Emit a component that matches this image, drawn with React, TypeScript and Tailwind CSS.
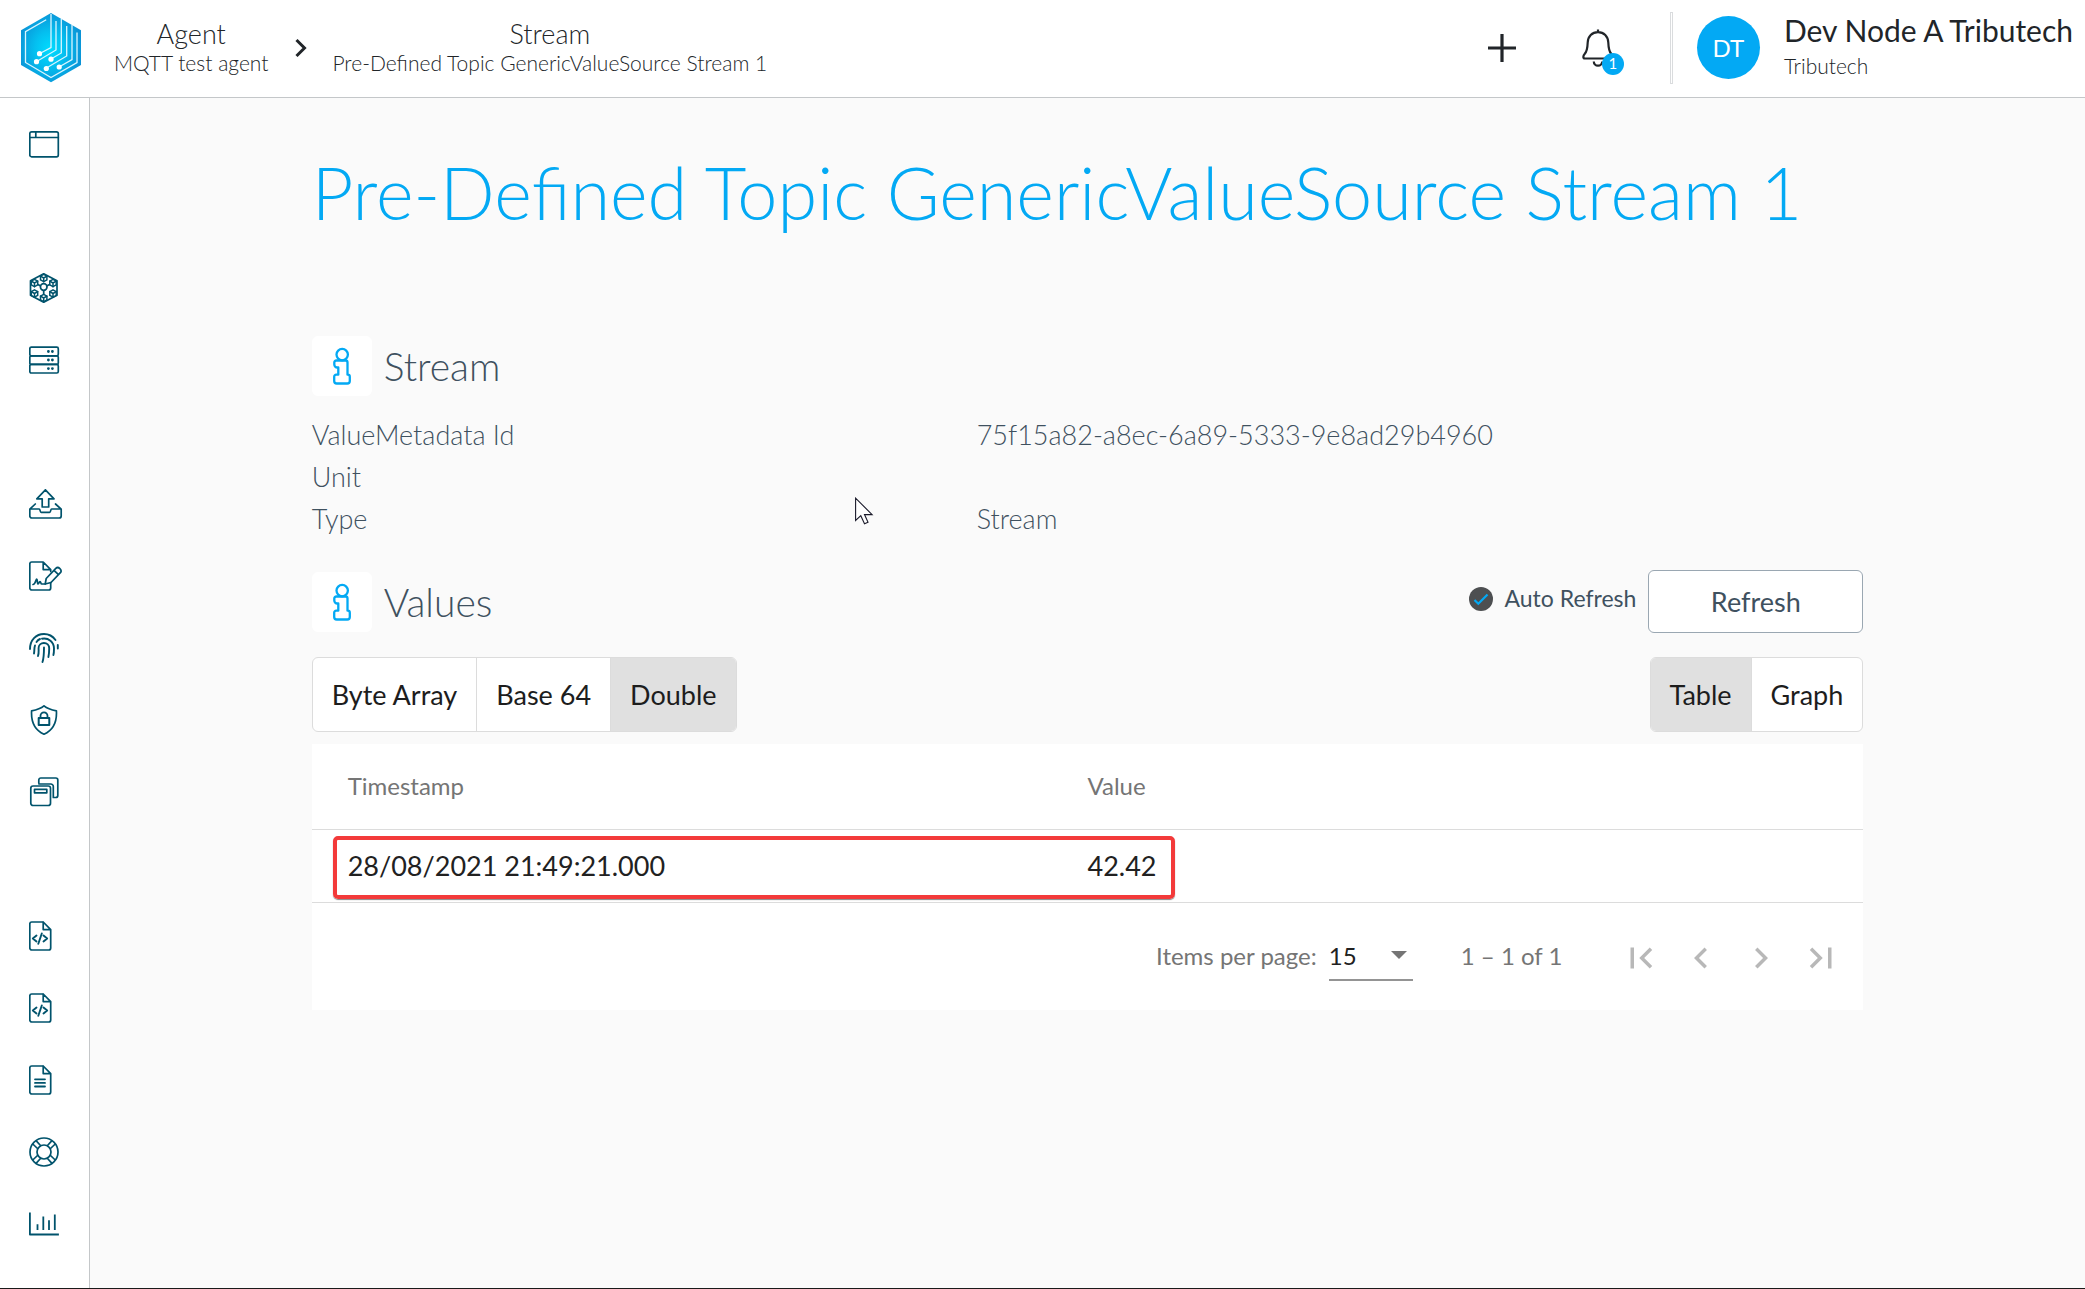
import React from "react";

type IconProps = { children: React.ReactNode };

function LineIcon({ children }: IconProps) {
  return (
    <svg
      aria-hidden="true"
      width="34"
      height="30"
      viewBox="0 0 34 30"
      fill="none"
      stroke="#00536c"
      strokeWidth="1.7"
      strokeLinecap="round"
      strokeLinejoin="round"
    >
      {children}
    </svg>
  );
}

function PageOutline() {
  return (
    <path d="M13.7 1H2.7A2 2 0 0 0 .8 3v24a2 2 0 0 0 2 2h16.900a2 2 0 0 0 2-2V8.600L14.200 1v7.600h7.500" />
  );
}

function WindowIcon() {
  return (
    <LineIcon>
      <rect x=".8" y="2.800" width="28.500" height="25" rx="1.800" />
      <path d="M.8 8.500h28.500M6.800 3v5.500" />
    </LineIcon>
  );
}

function Cube({ x, y }: { x: number; y: number }) {
  return (
    <g transform={`translate(${x} ${y})`} strokeWidth="1.5">
      <path fill="white" d="M0-3.700 3.200-1.900V1.900L0 3.700-3.200 1.900V-1.900Z" />
      <path d="M-3.200-1.900 0 0 3.200-1.900M0 0v3.700" />
    </g>
  );
}

function NetworkIcon() {
  return (
    <LineIcon>
      <path d="M14.700.8 28 7.800v14.400l-13.300 7-13.200-7V7.800Z" />
      <path d="M14.700 14.500 5.500 9.800M14.700 14.500 24 9.800M14.700 14.500V25" />
      <circle cx="14.700" cy="14" r="3.300" fill="white" />
      <Cube x={14.7} y={5} />
      <Cube x={5.5} y={10} />
      <Cube x={24} y={10} />
      <Cube x={5.5} y={20.5} />
      <Cube x={24} y={20.5} />
      <Cube x={14.7} y={25} />
    </LineIcon>
  );
}

function ServerIcon() {
  return (
    <LineIcon>
      <rect x=".8" y="2.200" width="28.500" height="8.600" rx="1.500" />
      <rect x=".8" y="10.800" width="28.500" height="8.600" rx="1.500" />
      <rect x=".8" y="19.400" width="28.500" height="8.600" rx="1.500" />
      <path strokeWidth="2.800" d="M19.400 6.500h.01M23.400 6.500h.01M19.400 15h.01M23.400 15h.01M19.400 23.600h.01M23.400 23.600h.01" />
    </LineIcon>
  );
}

function UploadIcon() {
  return (
    <LineIcon>
      <path d="M16.400.8 25 9.800h-5.300V18h-6.500V9.800H7.800Z" />
      <path d="M6.300 15 .8 20.200V27a2 2 0 0 0 2 2h27.400a2 2 0 0 0 2-2v-6.800L26.500 15M.8 20h9.400c1.200 0 .6 3.400 2 3.400h8.400c1.400 0 .8-3.400 2-3.400h9.600" />
    </LineIcon>
  );
}

function SignatureIcon() {
  return (
    <LineIcon>
      <path d="M21.700 10.500V8.600L14.200 1H2.700A2 2 0 0 0 .8 3v24a2 2 0 0 0 2 2h16.900a2 2 0 0 0 2-2v-5.500M14.200 1v7.600h7.500" />
      <path d="M4 23.500c2.500 0 2.800-5.500 3.700-5.500 1 0 .3 5 1.400 5 1 0 .9-2.500 1.900-2.500s.6 2.500 1.700 2.500h3.600" />
      <path d="m16.200 23 1-5.500 9.600-10.200c2.600-2.300 6.800 1.600 4.600 4.400L22 21.500ZM25 9.400l4.500 4.300" />
    </LineIcon>
  );
}

function FingerprintIcon() {
  return (
    <LineIcon>
      <g strokeWidth="1.900">
        <path d="M1 16C1 7 7 1 15 1c5 0 9 2.500 11.500 6" />
        <path d="M28.800 12v3.500" />
        <path d="M5 20.500c.6-3 0-5.500 1-8" />
        <path d="M7.500 9c1-1.500 2-2.400 3.500-3" />
        <path d="M13 5.700C19.500 4.500 25 9 25 15.500c0 2.500 0 4.500-.6 6.500" />
        <path d="M9 23c1-3 .6-5 .6-8 0-3 2.400-5 5.300-5 3 0 5.300 2.300 5.300 5.300 0 3 0 5.500-.8 8.700" />
        <path d="M15 14.500c0 5 0 10-1.500 14.500" />
      </g>
    </LineIcon>
  );
}

function ShieldIcon() {
  return (
    <LineIcon>
      <path d="M15 .8C11.500 3.800 7 5 2.600 5.800 2 16 4.500 24.500 15 29.200 25.500 24.500 28 16 27.400 5.800 23 5 18.500 3.800 15 .8Z" />
      <rect x="9.700" y="13" width="10.600" height="7" strokeWidth="2" />
      <path strokeWidth="1.800" d="M11.500 13v-2.200a3.500 3.500 0 0 1 7 0V13" />
    </LineIcon>
  );
}

function StackIcon() {
  return (
    <LineIcon>
      <path d="M9.800 6V3a2 2 0 0 1 2-2h15a2 2 0 0 1 2 2v15.500a2 2 0 0 1-2 2h-2.500v-11a2.500 2.500 0 0 0-2.500-2.500H10" />
      <rect x="1.800" y="9" width="19.700" height="19.500" rx="2.300" />
      <rect x="5.500" y="12.400" width="12.300" height="3.400" />
    </LineIcon>
  );
}

function CodeFileIcon() {
  return (
    <LineIcon>
      <PageOutline />
      <path strokeWidth="1.900" d="m7.500 14.500-3.700 3 3.700 3M14.500 14.500l3.700 3-3.700 3M12.800 12.500 9.300 22.800" />
    </LineIcon>
  );
}

function TextFileIcon() {
  return (
    <LineIcon>
      <PageOutline />
      <path strokeWidth="1.800" d="M6 14.300h10M6 17.900h10M6 21.500h10" />
    </LineIcon>
  );
}

function LifebuoyIcon() {
  return (
    <LineIcon>
      <circle cx="15" cy="15" r="14" />
      <circle cx="15" cy="15" r="7" />
      <path d="m8.500 11.500-4.200-4M11.500 8.500l-4-4.300M18.500 8.500l4-4.300M21.500 11.500l4.200-4M21.500 18.500l4.200 4M18.500 21.500l4 4.300M11.500 21.500l-4 4.300M8.500 18.500l-4.200 4" />
    </LineIcon>
  );
}

function ChartIcon() {
  return (
    <LineIcon>
      <g strokeLinecap="butt" strokeWidth="1.800">
        <path d="M.9 3.500v22h29" />
        <path d="M8.500 21v-5.700M14.300 21V7.500M20 21v-9.800M25.800 21V5.500" />
      </g>
    </LineIcon>
  );
}

type NavEntry = { label: string; icon: () => React.JSX.Element };

const navGroups: NavEntry[][] = [
  [{ label: "Dashboard", icon: WindowIcon }],
  [
    { label: "Network", icon: NetworkIcon },
    { label: "Agents", icon: ServerIcon },
  ],
  [
    { label: "Publish", icon: UploadIcon },
    { label: "Contracts", icon: SignatureIcon },
    { label: "Proofs", icon: FingerprintIcon },
    { label: "Security", icon: ShieldIcon },
    { label: "Catalog", icon: StackIcon },
  ],
  [
    { label: "Data API", icon: CodeFileIcon },
    { label: "Trust API", icon: CodeFileIcon },
    { label: "Documentation", icon: TextFileIcon },
    { label: "Support", icon: LifebuoyIcon },
    { label: "Statistics", icon: ChartIcon },
  ],
];

function Logo() {
  return (
    <svg aria-hidden="true" width="60" height="70" viewBox="0 0 60 70">
      <defs>
        <radialGradient id="logo-fill" cx=".48" cy=".52" r=".55">
          <stop offset="0" stopColor="#00dcff" />
          <stop offset=".45" stopColor="#04c0f0" />
          <stop offset="1" stopColor="#0a92d6" />
        </radialGradient>
      </defs>
      <path fill="url(#logo-fill)" d="M30 0 60 17.300v34.600L30 69.200 0 51.900V17.300Z" />
      <g fill="none" stroke="#d9f5ff" strokeWidth="1.300">
        <path d="M25.200 6.800 4.500 18.700v30.800L30 64.600l26-15V19.500" />
        <path d="M30 1v33.500l-11.700 6.300" />
        <path d="M35 8v29L15.300 48.700" />
        <path d="M40.300 6v34L30 46" />
        <path d="M45.700 13v30L25 55.300" />
        <path d="M51 12v34.500L38 54" />
      </g>
      <g fill="white">
        <circle cx="18.500" cy="40.700" r="2.600" />
        <circle cx="15.500" cy="48.700" r="2.600" />
        <circle cx="30" cy="46.200" r="2.600" />
        <circle cx="25.300" cy="55.500" r="2.600" />
        <circle cx="38.200" cy="54" r="2.600" />
      </g>
    </svg>
  );
}

function InfoBadge() {
  return (
    <span className="flex size-[60px] shrink-0 items-center justify-center rounded-md bg-white">
      <svg aria-hidden="true" width="20" height="38" viewBox="0 0 20 38" fill="none" stroke="#03a9f4" strokeWidth="2.300" strokeLinejoin="round">
        <ellipse cx="10.200" cy="7.600" rx="5.700" ry="5.700" />
        <path d="M6.500 13.500h7a2 2 0 0 1 2 2v12.200h.3a2 2 0 0 1 2 2V34a2.500 2.500 0 0 1-2.500 2.500H4.700A2.500 2.500 0 0 1 2.200 34v-4.300a2 2 0 0 1 2-2h2.100v-7.200h-1a3 3 0 0 1-3-3v-2a2 2 0 0 1 2-2h2.200" />
      </svg>
    </span>
  );
}

function SectionHeading({ children }: { children: string }) {
  return (
    <h2 className="flex items-center gap-3 text-[39px] leading-[60px] font-light text-[#3f515f]">
      <InfoBadge />
      {children}
    </h2>
  );
}

function ToggleGroup({ label, options, selected }: { label: string; options: string[]; selected: string }) {
  return (
    <div role="group" aria-label={label} className="flex h-[75px] divide-x divide-[#dcdcdc] overflow-hidden rounded-md border border-[#dcdcdc] bg-white">
      {options.map((option) => (
        <button
          key={option}
          type="button"
          aria-pressed={option === selected}
          className="px-[19px] pt-0.5 text-[27px] text-[#1d1d1d] aria-pressed:bg-[#e0e0e0]"
        >
          {option}
        </button>
      ))}
    </div>
  );
}

const pagerButtons = [
  { label: "First page", d: "M18.410 16.590 13.820 12l4.590-4.590L17 6l-6 6 6 6zM6 6h2v12H6z" },
  { label: "Previous page", d: "M15.410 7.410 14 6l-6 6 6 6 1.410-1.410L10.830 12z" },
  { label: "Next page", d: "M10 6 8.590 7.410 13.170 12l-4.580 4.590L10 18l6-6z" },
  { label: "Last page", d: "M5.590 7.410 10.180 12l-4.590 4.590L7 18l6-6-6-6zM16 6h2v12h-2z" },
];

function Header() {
  return (
    <header className="flex h-[98px] shrink-0 items-center border-b border-[#c4c7c9] bg-white pb-0.5 text-[#212529]">
      <a href="#home" aria-label="Home" className="ml-[21px]">
        <Logo />
      </a>
      <nav aria-label="Breadcrumb" className="ml-[33px] flex items-center text-center font-light">
        <a href="#agent" className="block">
          <span className="block text-[27px] leading-[30px]">Agent</span>
          <span className="block text-[21px] leading-7">MQTT test agent</span>
        </a>
        <svg aria-hidden="true" className="mr-6 ml-[26px]" width="14" height="20" viewBox="0 0 14 20" fill="none" stroke="#212529" strokeWidth="3">
          <path d="m2.500 2 8 8-8 8" />
        </svg>
        <a href="#stream" className="block">
          <span className="block text-[27px] leading-[30px]">Stream</span>
          <span className="block text-[21px] leading-7">Pre-Defined Topic GenericValueSource Stream 1</span>
        </a>
      </nav>
      <div className="ml-auto flex items-center">
        <button type="button" aria-label="Add">
          <svg aria-hidden="true" width="28" height="28" viewBox="0 0 28 28" stroke="#212529" strokeWidth="3.200">
            <path d="M14 0v28M0 14h28" />
          </svg>
        </button>
        <button type="button" aria-label="Notifications" className="relative ml-[66px]">
          <svg aria-hidden="true" width="32" height="38" viewBox="0 0 32 38" fill="none" stroke="#212529" strokeWidth="2.200" strokeLinejoin="round">
            <path d="M16 .5v3M16 3.200C10 3.200 6 7.500 5.700 13.500 5.500 19 5.300 22 2.800 24.800c-2 2.300-2 4.700.2 4.700h26c2.200 0 2.200-2.400.2-4.700-2.500-2.800-2.700-5.800-2.900-11.300C26 7.500 22 3.200 16 3.200ZM11.800 32.500a4.200 4.200 0 0 0 8.400 0" />
          </svg>
          <span className="absolute -right-2.5 -bottom-2 flex size-[22px] items-center justify-center rounded-full bg-[#03a9f4] text-[15px] text-white">
            1
          </span>
        </button>
        <span className="ml-14 h-[72px] w-[3px] border border-[#dadcde]" />
        <span className="ml-6 flex size-[63px] items-center justify-center rounded-full bg-[#03a9f4] text-2xl text-white">DT</span>
        <div className="mr-3 ml-6">
          <div className="text-[30px] leading-9">Dev Node A Tributech</div>
          <div className="text-[21px] leading-9 font-light">Tributech</div>
        </div>
      </div>
    </header>
  );
}

function Sidebar() {
  return (
    <nav aria-label="Main" className="flex w-[90px] shrink-0 flex-col gap-[72px] border-r border-[#c4c7c9] bg-white pt-[10px]">
      {navGroups.map((group) => (
        <ul key={group[0].label}>
          {group.map(({ label, icon: Icon }) => (
            <li key={label}>
              <a href="#nav" aria-label={label} className="flex h-[72px] items-center pl-[29px]">
                <Icon />
              </a>
            </li>
          ))}
        </ul>
      ))}
    </nav>
  );
}

const details = [
  ["ValueMetadata Id", "75f15a82-a8ec-6a89-5333-9e8ad29b4960"],
  ["Unit", ""],
  ["Type", "Stream"],
];

export default function App() {
  return (
    <div className="flex min-h-screen flex-col border-b border-[#1a1a1a] bg-[#fafafa] font-['Lato',sans-serif]">
      <Header />
      <div className="flex flex-1">
        <Sidebar />
        <main className="min-w-0 flex-1">
          <div className="mx-auto w-7/9 pt-[46px]">
            <h1 className="text-[72px] leading-[96px] font-light text-[#03a9f4]">
              Pre-Defined Topic GenericValueSource Stream 1
            </h1>

            <section className="mt-24">
              <SectionHeading>Stream</SectionHeading>
              <dl className="mt-[18px] text-[27px] leading-[42px] font-light text-[#3f515f]">
                {details.map(([term, value]) => (
                  <div key={term} className="grid min-h-[42px] grid-cols-[3fr_4fr]">
                    <dt>{term}</dt>
                    <dd>{value}</dd>
                  </div>
                ))}
              </dl>
            </section>

            <section className="mt-[30px]">
              <div className="flex h-[63px] items-center">
                <SectionHeading>Values</SectionHeading>
                <label className="mr-3 mb-1.5 ml-auto flex items-center gap-3 text-[23px] text-[#3f515f]">
                  <span className="relative flex size-6">
                    <input type="checkbox" defaultChecked className="size-6 appearance-none rounded-full bg-[#4d4f51]" />
                    <svg aria-hidden="true" className="pointer-events-none absolute inset-0" width="24" height="24" viewBox="0 0 24 24" fill="none" stroke="#03a9f4" strokeWidth="2.200">
                      <path d="m5.500 13 3.800 3.800L18.500 7.500" />
                    </svg>
                  </span>
                  Auto Refresh
                </label>
                <button type="button" className="h-[63px] w-[215px] rounded-md border border-[#9aa7b2] bg-white pt-0.5 text-[27px] text-[#3f515f]">
                  Refresh
                </button>
              </div>

              <div className="mt-6 flex justify-between">
                <ToggleGroup label="Value format" options={["Byte Array", "Base 64", "Double"]} selected="Double" />
                <ToggleGroup label="View" options={["Table", "Graph"]} selected="Table" />
              </div>

              <div className="relative mt-3 bg-white">
                <table className="w-full table-fixed text-left text-[27px] text-[#212121]">
                  <thead>
                    <tr className="h-[85px] border-b border-[#dcdcdc] text-2xl text-[#757575]">
                      <th className="pl-9 font-normal">Timestamp</th>
                      <th className="font-normal">Value</th>
                    </tr>
                  </thead>
                  <tbody>
                    <tr className="h-[73px] border-b border-[#dcdcdc]">
                      <td className="pt-0.5 pl-9">28/08/2021 21:49:21.000</td>
                      <td className="pt-0.5">42.42</td>
                    </tr>
                  </tbody>
                </table>
                <div className="pointer-events-none absolute top-[92px] left-[21px] h-[63px] w-[842px] rounded-[5px] border-4 border-[#f33a3a] shadow-[0_1px_1px_#888]" />

                <div className="flex h-[107px] items-center justify-end pr-3 text-2xl text-[#757575]">
                  <label htmlFor="page-size">Items per page:</label>
                  <div className="relative mt-0.5 ml-3">
                    <select id="page-size" defaultValue="15" className="h-12 w-[84px] appearance-none border-b-2 border-[#949494] bg-transparent text-[#212121]">
                      <option value="15">15</option>
                      <option value="30">30</option>
                    </select>
                    <span className="pointer-events-none absolute top-[18px] right-1.5 border-x-8 border-t-8 border-x-transparent border-t-[#757575]" />
                  </div>
                  <span className="mr-[49px] ml-12">1 – 1 of 1</span>
                  <div className="flex pt-1">
                    {pagerButtons.map(({ label, d }) => (
                      <button key={label} type="button" aria-label={label} disabled className="flex size-[60px] items-center justify-center">
                        <svg aria-hidden="true" width="42" height="42" viewBox="0 0 24 24" fill="#b8b8b8">
                          <path d={d} />
                        </svg>
                      </button>
                    ))}
                  </div>
                </div>
              </div>
            </section>
          </div>
        </main>
      </div>
      <svg aria-hidden="true" className="pointer-events-none absolute top-[497px] left-[855px]" width="20" height="28" viewBox="0 0 20 28">
        <path d="M.6 1.200v22.300l5.200-4.800 3.700 8 3.500-1.500-3.500-7.600h7.600Z" fill="white" stroke="#1a1a2a" strokeWidth="1.100" />
      </svg>
    </div>
  );
}
